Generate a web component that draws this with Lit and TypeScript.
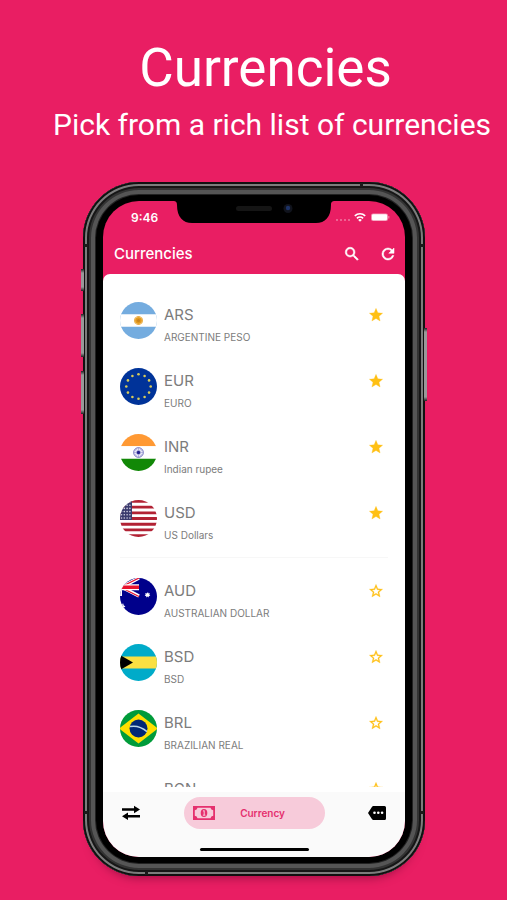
import { LitElement, html, css, svg, nothing } from "lit";
import { customElement, state } from "lit/decorators.js";

interface Currency {
  code: string;
  name: string;
  favourite: boolean;
}

const euroStars = Array.from({ length: 12 }, (_, i) => {
  const a = (i * Math.PI) / 6;
  return svg`<circle cx=${18.5 + 12.2 * Math.sin(a)} cy=${18.5 - 12.2 * Math.cos(a)} r="1.3" fill="#d8cc58"/>`;
});

const sunRays = Array.from({ length: 12 }, (_, i) => svg`
  <path d="M18.5 14v9" stroke="#e9a83a" stroke-width="0.9" transform="rotate(${i * 15} 18.5 18.5)"/>`);

const wheelSpokes = Array.from({ length: 6 }, (_, i) => svg`
  <path d="M18.5 14v9" stroke="#7474c4" stroke-width="0.5" transform="rotate(${i * 30} 18.5 18.5)"/>`);

const usStars = Array.from({ length: 24 }, (_, i) => svg`
  <circle cx=${1.5 + (i % 4) * 2.8} cy=${2 + Math.floor(i / 4) * 3.2} r="0.8" fill="#d4d3e4"/>`);

const flags: Record<string, unknown> = {
  ARS: svg`<path fill="#74acdf" d="M0 0h37v37H0z"/><path fill="#fff" d="M0 12.3h37v12.4H0z"/>
    ${sunRays}<circle cx="18.5" cy="18.5" r="3" fill="#e39a1c"/><circle cx="18.5" cy="18.5" r="1.6" fill="#c9821d"/>`,
  EUR: svg`<path fill="#003399" d="M0 0h37v37H0z"/>${euroStars}`,
  INR: svg`<path fill="#ff9933" d="M0 0h37v12.3H0z"/><path fill="#fff" d="M0 12.3h37v12.4H0z"/>
    <path fill="#128807" d="M0 24.7h37V37H0z"/>
    <circle cx="18.5" cy="18.5" r="4.8" fill="#fff" stroke="#5a5ab4" stroke-width="0.9"/>${wheelSpokes}
    <circle cx="18.5" cy="18.5" r="1.7" fill="#22228f"/>`,
  USD: svg`<path fill="#fff" d="M0 0h37v37H0z"/>
    <path stroke="#b22234" stroke-width="2.85" d="M0 1.4h37M0 7.1h37M0 12.8h37M0 18.5h37M0 24.2h37M0 29.9h37M0 35.6h37"/>
    <path fill="#3c3b6e" d="M0 0h12v20H0z"/>${usStars}`,
  AUD: svg`<path fill="#00008b" d="M0 0h37v37H0z"/>
    <path stroke="#fff" stroke-width="3.4" d="M-16 0l35 18M-16 18.5L19 0"/>
    <path stroke="#e8112d" stroke-width="1.3" d="M1 9.5l18 9M1 9L19 0"/>
    <path stroke="#fff" stroke-width="6" d="M0 9.2h19"/><path stroke="#fff" stroke-width="4" d="M0 0v18"/>
    <path stroke="#e8112d" stroke-width="3.4" d="M0 9.2h19"/>
    <path fill="#fff" d="M28 14.2l.6 1.300 1.500-.2-.8 1.300 1 1.100-1.500.3-.1 1.500-1.200-.9-1.200.9-.1-1.500-1.500-.3 1-1.100-.8-1.300 1.500.2zM0 26.500l2 .5 1-2 .8 2.500 1.600.7-1.400 1.300.5 2-1.700-.9L0 31z"/>`,
  BSD: svg`<path fill="#00abc9" d="M0 0h37v37H0z"/><path fill="#fae042" d="M0 12.500h37v12H0z"/><path d="M0 11l13 7.500L0 26z"/>`,
  BRL: svg`<path fill="#009b3a" d="M0 0h37v37H0z"/><path fill="#fedf00" d="M18.500 3.500L38 18.500l-19.500 15L-1 18.500z"/>
    <circle cx="18.500" cy="18.500" r="9" fill="#002776"/>
    <path d="M10 16.600q9-1.700 17 5" fill="none" stroke="#b9d6e6" stroke-width="1.500"/>`,
};

@customElement("currency-row")
export class CurrencyRow extends LitElement {
  static properties = { item: { attribute: false } };
  declare item: Currency;

  static styles = css`
    :host {
      display: flex;
      flex: none;
      height: 66px;
      padding: 0 21px 0 17px;
      box-sizing: border-box;
      align-items: center;
      gap: 7px;
    }
    .flag {
      width: 37px;
      height: 37px;
      border-radius: 50%;
      flex: none;
    }
    .text {
      flex: 1;
      min-width: 0;
      padding-top: 12px;
      color: #7c7c7c;
    }
    .code {
      font-size: 15px;
      line-height: 22px;
    }
    .name {
      min-height: 22px;
      font-size: 10px;
      line-height: 22px;
      white-space: nowrap;
    }
    .star {
      align-self: flex-start;
      margin-top: 20px;
      padding: 0;
      border: 0;
      background: none;
      width: 16px;
      height: 16px;
      color: #ffc014;
      cursor: pointer;
    }
    .star svg {
      display: block;
      width: 16px;
      height: 16px;
      fill: currentColor;
      stroke: currentColor;
      stroke-width: 0.4px;
    }
  `;

  private toggle() {
    this.dispatchEvent(new CustomEvent("toggle-favourite"));
  }

  render() {
    const { code, name, favourite } = this.item;
    return html`
      <svg class="flag" viewBox="0 0 37 37" aria-hidden="true">${flags[code] ?? nothing}</svg>
      <div class="text">
        <div class="code">${code}</div>
        <div class="name">${name}</div>
      </div>
      <button class="star" aria-label="Favourite ${code}" aria-pressed=${favourite} @click=${this.toggle}>
        <svg viewBox="0 0 24 24">
          ${favourite
            ? svg`<path d="M12 17.270L18.180 21l-1.640-7.030L22 9.240l-7.190-.61L12 2 9.190 8.630 2 9.240l5.460 4.730L5.820 21z"/>`
            : svg`<path d="M22 9.240l-7.190-.62L12 2 9.190 8.630 2 9.240l5.460 4.730L5.820 21 12 17.270 18.180 21l-1.630-7.030L22 9.240zM12 15.400l-3.760 2.270 1-4.280-3.320-2.880 4.380-.38L12 6.100l1.710 4.040 4.380.38-3.320 2.880 1 4.280L12 15.400z"/>`}
        </svg>
      </button>
    `;
  }
}

@customElement("app-root")
export class AppRoot extends LitElement {
  @state() private items: Currency[] = [
    { code: "ARS", name: "ARGENTINE PESO", favourite: true },
    { code: "EUR", name: "EURO", favourite: true },
    { code: "INR", name: "Indian rupee", favourite: true },
    { code: "USD", name: "US Dollars", favourite: true },
    { code: "AUD", name: "AUSTRALIAN DOLLAR", favourite: false },
    { code: "BSD", name: "BSD", favourite: false },
    { code: "BRL", name: "BRAZILIAN REAL", favourite: false },
    { code: "BGN", name: "", favourite: false },
  ];

  static styles = css`
    :host {
      display: flex;
      flex-direction: column;
      height: 100vh;
      box-sizing: border-box;
      padding: 36px 0 24px;
      background: #e91e63;
      color: #fff;
      font-family: Inter, "Liberation Sans", sans-serif;
      overflow: hidden;
    }
    .hero {
      flex: none;
      height: 146px;
      text-align: center;
      font-family: Roboto, sans-serif;
      white-space: nowrap;
    }
    h1 {
      margin: 0;
      padding-left: 24px;
      font-size: 53px;
      line-height: 64px;
      font-weight: 400;
    }
    .tagline {
      margin: 0;
      padding-left: 37px;
      font-size: 30px;
      line-height: 50px;
    }
    .phone {
      position: relative;
      flex: 1;
      min-height: 0;
      display: flex;
      margin: 0 82px 0 83px;
      padding: 19px 20px 19px 20px;
      border-radius: 56px;
      background: #000;
      box-shadow:
        0 10px 10px -8px rgba(90, 0, 40, 0.5),
        inset 0 0 0 2px #101010,
        inset 0 0 0 4px #7c7c7c,
        inset 0 0 0 6px #161616,
        inset 0 0 0 8px #333,
        inset 0 0 0 12px #555,
        inset 0 0 0 13px #222;
    }
    .key {
      position: absolute;
      width: 3px;
      background: linear-gradient(#222, #999 4px, #999 calc(100% - 4px), #222);
    }
    .key.mute { left: -2px; top: 87px; height: 22px; }
    .key.up { left: -2px; top: 132px; height: 43px; }
    .key.down { left: -2px; top: 189px; height: 43px; }
    .key.side { right: -2px; top: 146px; height: 73px; }
    .band {
      position: absolute;
      background: #1a1a1a;
    }
    .band.top { right: 62px; top: 1px; width: 3px; height: 4px; }
    .band.bottom { left: 62px; bottom: 1px; width: 3px; height: 4px; }
    .band.lt { left: 1px; top: 62px; width: 4px; height: 3px; }
    .band.rt { right: 1px; top: 62px; width: 4px; height: 3px; }
    .band.lb { left: 1px; bottom: 62px; width: 4px; height: 3px; }
    .band.rb { right: 1px; bottom: 62px; width: 4px; height: 3px; }
    .screen {
      flex: 1;
      min-width: 0;
      display: flex;
      flex-direction: column;
      border-radius: 36px;
      overflow: hidden;
      background: #e91e63;
    }
    .notch {
      position: absolute;
      top: 18px;
      left: 50%;
      width: 162px;
      height: 23px;
      margin-left: -81px;
    }
    .status {
      flex: none;
      display: flex;
      align-items: center;
      justify-content: space-between;
      height: 32px;
      padding: 0 15px 0 28px;
      font-size: 12px;
      font-weight: 600;
    }
    .status svg {
      width: 56px;
      height: 12px;
    }
    .bar {
      flex: none;
      display: flex;
      align-items: center;
      height: 41px;
      padding: 0 8px 0 11px;
    }
    h2 {
      flex: 1;
      margin: 0;
      font-size: 15px;
      font-weight: 500;
      line-height: 20px;
    }
    button {
      border: 0;
      padding: 0;
      background: none;
      font: inherit;
      color: inherit;
      cursor: pointer;
    }
    .bar button {
      width: 18px;
      height: 18px;
      margin-left: 18px;
    }
    .bar svg {
      display: block;
      width: 18px;
      height: 18px;
      fill: #fff;
      stroke: #fff;
      stroke-width: 0.7px;
    }
    .sheet {
      flex: 1;
      min-height: 0;
      display: flex;
      flex-direction: column;
      padding-bottom: 5px;
      border-radius: 7px 7px 0 0;
      background: #fff;
    }
    .list {
      flex: 1;
      min-height: 0;
      display: flex;
      flex-direction: column;
      padding-top: 13px;
      overflow: hidden;
    }
    .rule {
      flex: none;
      height: 1px;
      margin: 6px 17px 5px;
      border: 0;
      background: #f7f7f7;
    }
    .dock {
      flex: none;
      background: #fafafa;
    }
    nav {
      display: flex;
      align-items: center;
      justify-content: space-between;
      height: 42px;
      padding: 0 19px 0 18px;
      color: #000;
    }
    nav svg {
      display: block;
    }
    .current {
      display: flex;
      align-items: center;
      width: 141px;
      height: 32px;
      padding: 0 40px 0 9px;
      border-radius: 16px;
      background: #f7cbda;
      color: #e5306e;
      font-size: 10px;
      font-weight: 600;
      justify-content: space-between;
    }
    .home {
      width: 109px;
      height: 3px;
      margin: 14px auto 6px;
      border-radius: 2px;
      background: #000;
    }
  `;

  private toggle(item: Currency) {
    this.items = this.items.map((i) => (i === item ? { ...i, favourite: !i.favourite } : i));
  }

  private row = (item: Currency) => html`
    <currency-row .item=${item} @toggle-favourite=${() => this.toggle(item)}></currency-row>
  `;

  render() {
    return html`
      <header class="hero">
        <h1>Currencies</h1>
        <p class="tagline">Pick from a rich list of currencies</p>
      </header>
      <main class="phone">
        <span class="key mute"></span><span class="key up"></span><span class="key down"></span><span class="key side"></span>
        <span class="band top"></span><span class="band bottom"></span>
        <span class="band lt"></span><span class="band rt"></span><span class="band lb"></span><span class="band rb"></span>
        <div class="screen">
          <div class="status">
            <span>9:46</span>
            <svg viewBox="0 0 56 12" aria-hidden="true">
              <g fill="#fff" opacity="0.4">
                <circle cx="3" cy="9" r="1"/><circle cx="7" cy="9" r="1"/><circle cx="11" cy="9" r="1"/><circle cx="15" cy="9" r="1"/>
              </g>
              <g fill="none" stroke="#fff" stroke-width="1.700">
                <path d="M20.800 4.800a7.600 7.600 0 0 1 10.400 0"/><path d="M22.900 7.300a4.500 4.500 0 0 1 6.200 0"/>
              </g>
              <path fill="#fff" d="M24.200 8.900a2.700 2.700 0 0 1 3.600 0L26 10.800z"/>
              <rect x="37" y="2.500" width="17" height="7.500" rx="2" fill="#f48fb1"/>
              <rect x="38" y="3.300" width="15" height="6" rx="1.200" fill="#fff"/>
              <path d="M54.800 5v2.500" stroke="#f48fb1"/>
            </svg>
          </div>
          <div class="bar">
            <h2>Currencies</h2>
            <button aria-label="Search">
              <svg viewBox="0 0 24 24"><path d="M15.500 14h-.79l-.28-.27A6.471 6.471 0 0 0 16 9.500 6.500 6.500 0 1 0 9.500 16c1.610 0 3.090-.59 4.230-1.570l.27.28v.79l5 4.990L20.490 19l-4.990-5zm-6 0C7.010 14 5 11.990 5 9.500S7.010 5 9.500 5 14 7.010 14 9.500 11.990 14 9.500 14z"/></svg>
            </button>
            <button aria-label="Refresh">
              <svg viewBox="0 0 24 24"><path d="M17.650 6.350A7.958 7.958 0 0 0 12 4a8 8 0 1 0 7.730 10h-2.080A5.990 5.990 0 0 1 12 18a6 6 0 1 1 0-12c1.660 0 3.140.69 4.220 1.780L13 11h7V4l-2.350 2.350z"/></svg>
            </button>
          </div>
          <div class="sheet">
            <div class="list">
              ${this.items.slice(0, 4).map(this.row)}
              <hr class="rule" />
              ${this.items.slice(4).map(this.row)}
            </div>
          </div>
          <div class="dock">
            <nav>
              <button aria-label="Convert">
                <svg width="20" height="16" viewBox="0 0 20 16"><path d="M1 3.300h12V.8l6 3.700-6 3.700V5.700H1zM19 10H7V7.500l-6 3.800L7 15v-2.500h12z"/></svg>
              </button>
              <button class="current" aria-current="page">
                <svg width="22" height="14" viewBox="0 0 22 14" fill="currentColor">
                  <path fill-rule="evenodd" d="M0 0h22v14H0zM4.500 1.800A3 3 0 0 1 1.800 4.300v5.400a3 3 0 0 1 2.700 2.500h13a3 3 0 0 1 2.700-2.500V4.300a3 3 0 0 1-2.700-2.500z"/>
                  <ellipse cx="11" cy="7" rx="3.300" ry="3.900"/>
                  <path d="M10 5.200l1.200-.7V9M9.900 9.200h2.500" fill="none" stroke="#f7cbda"/>
                </svg>
                <span>Currency</span>
              </button>
              <button aria-label="More">
                <svg width="18" height="14" viewBox="0 0 18 14"><path d="M5.500 0H16.500a1.500 1.500 0 0 1 1.500 1.500v11a1.500 1.500 0 0 1-1.500 1.500H5.500a2 2 0 0 1-1.600-.9L0 7 3.900.9A2 2 0 0 1 5.500 0z"/><circle cx="6.500" cy="6.800" r="1.300" fill="#fff"/><circle cx="10.300" cy="6.800" r="1.300" fill="#fff"/><circle cx="14.100" cy="6.800" r="1.300" fill="#fff"/></svg>
              </button>
            </nav>
            <div class="home"></div>
          </div>
        </div>
        <svg class="notch" viewBox="0 0 162 23" aria-hidden="true">
          <path d="M0 0h162v1c-3 0-4 1-4 4 0 12-6 18-15 18H19C10 23 4 17 4 5c0-3-1-4-4-4z"/>
          <rect x="63" y="6" width="36" height="5" rx="2.500" fill="#151515"/>
          <circle cx="115" cy="8.500" r="4.500" fill="#10131c"/><circle cx="115" cy="8" r="2.200" fill="#1d3266"/>
        </svg>
      </main>
    `;
  }
}
